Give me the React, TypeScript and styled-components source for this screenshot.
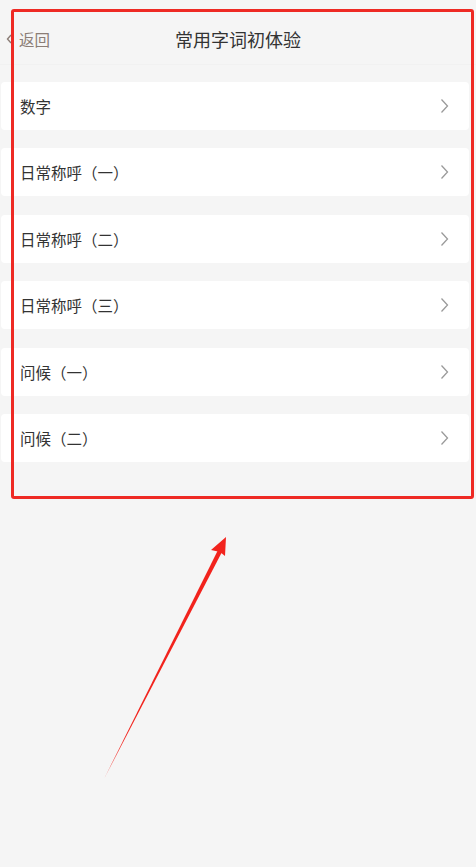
import styled, { createGlobalStyle } from 'styled-components';

const GlobalStyle = createGlobalStyle`
  html, body {
    margin: 0;
    padding: 0;
    background: #f5f5f5;
  }
  body {
    font-family: "Noto Sans CJK SC", "Noto Sans", sans-serif;
  }
`;

const items = ['数字', '日常称呼（一）', '日常称呼（二）', '日常称呼（三）', '问候（一）', '问候（二）'];

export default function App() {
  return (
    <>
      <GlobalStyle />
      <Page>
        <Header>
          <BackButton>
            <svg width="6" height="10" viewBox="0 0 6 10">
              <path d="M5 1 L1.5 5 L5 9" fill="none" stroke="#8b7d76" strokeWidth="1.4" />
            </svg>
            <span>返回</span>
          </BackButton>
          <Title>常用字词初体验</Title>
        </Header>
        <List>
          {items.map((item) => (
            <Row key={item}>
              <RowLabel>{item}</RowLabel>
              <svg width="9" height="16" viewBox="0 0 9 16">
                <path d="M1.5 1.5 L7.5 8 L1.5 14.5" fill="none" stroke="#9a9a9a" strokeWidth="1.3" />
              </svg>
            </Row>
          ))}
        </List>
        <Highlight />
        <Arrow width="476" height="867" viewBox="0 0 476 867">
          <path d="M104 779 L218 550 L222 552 Z" fill="#f2231d" />
          <path d="M226 537 L225 556 L220 552 L211 550 Z" fill="#f2231d" />
        </Arrow>
      </Page>
    </>
  );
}

const Page = styled.div`
  position: relative;
  width: 476px;
  min-height: 867px;
  background: #f5f5f5;
`;

const Header = styled.div`
  position: relative;
  height: 64px;
  display: flex;
  align-items: center;
  justify-content: center;
  border-bottom: 1px solid #f1f1f1;
`;

const BackButton = styled.div`
  position: absolute;
  left: 6px;
  top: 0;
  bottom: 0;
  padding-top: 14px;
  display: flex;
  align-items: center;
  gap: 7px;
  color: #8b7d76;
  font-size: 15.5px;
`;

const Title = styled.div`
  font-size: 18px;
  color: #333;
  padding-top: 14px;
`;

const List = styled.div`
  display: flex;
  flex-direction: column;
  gap: 18.4px;
  padding-top: 17px;
`;

const Row = styled.div`
  height: 48px;
  margin: 0 7px 0 1px;
  padding: 0 20px 0 19px;
  background: #fff;
  border-radius: 4px;
  display: flex;
  align-items: center;
  justify-content: space-between;
`;

const RowLabel = styled.span`
  font-size: 15.5px;
  color: #333;
`;

const Highlight = styled.div`
  position: absolute;
  left: 11px;
  top: 9px;
  width: 457px;
  height: 484px;
  border: 3px solid #ee2a24;
  border-radius: 3px;
  pointer-events: none;
`;

const Arrow = styled.svg`
  position: absolute;
  left: 0;
  top: 0;
  pointer-events: none;
`;
